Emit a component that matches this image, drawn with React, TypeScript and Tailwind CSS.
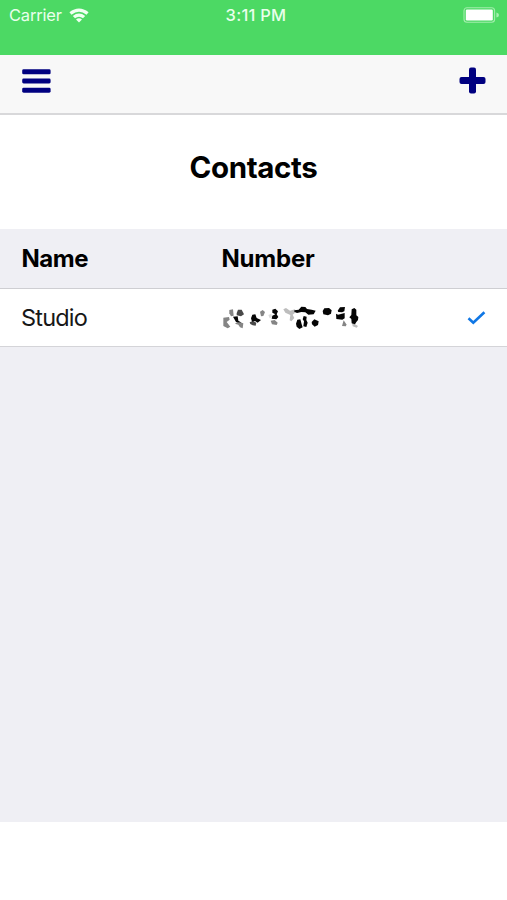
function WifiIcon() {
  return (
    <svg className="h-[15px] w-5" viewBox="0 0 20 15" fill="#f0fff2">
      <path d="M0.4 4.2Q10 -3.3 19.6 4.2L17.5 6.7Q10 .9 2.5 6.7Z" />
      <path d="M3.8 7.9Q10 3 16.2 7.9L14 10.3Q10 7.1 6 10.3Z" />
      <path d="M7 11.4Q10 8.9 13 11.4L10 14.6Z" />
    </svg>
  );
}

function BatteryIcon() {
  return (
    <svg className="h-4 w-9" viewBox="0 0 36 16" fill="none">
      <rect x="1" y=".8" width="30.6" height="14.4" rx="3" stroke="#a2edac" strokeWidth="1.1" />
      <rect x="2.8" y="2.6" width="27" height="10.8" rx="1.2" fill="#fff" />
      <path d="M33.4 5.4Q36 6 36 8T33.4 10.6Z" fill="#a5efb0" />
    </svg>
  );
}

// The number is obscured by scattered fragments.
function RedactedNumber() {
  return (
    <svg className="h-[26px] w-[145px]" viewBox="15 18 435 78">
      <g fill="#858585">
        <path d="M43 33l11-2 2 19-8 2-5-9Z" />
        <path d="M25 56l17-2 2 8-9 7 11 14-8 5-13-7Z" />
        <path d="M68 68l17 5-2 15-8-3-5-8-10-3Z" />
        <path d="M135 38l8-5 7 6-5 12-7 1Z" />
        <path d="M167 65l12-2 9 8-3 7-14-2Z" />
        <path d="M386 64l8 12-1 6-12-1Z" />
      </g>
      <g fill="#bdbdbd">
        <path d="M205 31l8-4 12 8 15-4 2 9-9 7 5 10-9 10-5-3 2-16-15-7Z" />
        <path d="M411 70l7 4 11 7-4 5-12-4Z" />
        <path d="M160 48l9-4 2 10-7 4Z" fill="#ddd" />
      </g>
      <g fill="#494949">
        <path d="M65 43l4-11 11 0 7 14-9 6-13-3Z" />
        <path d="M104 70l10-4 10 5-2 9-9-1-7-4Z" />
      </g>
      <g fill="#050505">
        <path d="M54 53l14-1 2 13 10 6-17-2Z" />
        <path d="M108 58l4-11 9-1 4 11 13 6-10 8-8-5-9 2Z" />
        <path d="M172 32l9-3 8 8-4 9 5 8-6 7-14-2 2-9 9-4-9-5Z" />
        <path d="M238 34l13-2 8-9 12 1 5 6 14 2 12 3-6 11-16 1-9-7-12-1-13 3-8-4Z" />
        <path d="M266 51l9 2-1 10 4 8-4 13-9-2 2-15-4-6Z" />
        <path d="M243 74l4-12 9-1 4 15 3 9-10 5-8-7Z" />
        <path d="M290 69l8-8 13 6-2 11-10 5-8-7Z" />
        <path d="M323 36l5-8 14-1 8 7-2 10-9 5-14-3Z" />
        <path d="M368 35l7-10 15-1-2 13-7 3-11-1Z" />
        <path d="M363 44l6 3 9-2 11-3 0 16-7 4-18-2Z" />
        <path d="M410 31l8-4 6 5 0 17 6 5-1 9-5 6-4 7-10-3-1-13-6-5 6-7Z" />
      </g>
    </svg>
  );
}

export default function App() {
  return (
    <div className="flex h-[900px] w-[507px] flex-col overflow-hidden bg-white font-['Inter','Liberation_Sans',sans-serif] text-black">
      <div className="grid h-[54.5px] grid-cols-3 items-start bg-[#4cd964] text-[#e9ffec]">
        <div className="flex h-[30px] items-center gap-[7px] pl-[9px]">
          <span className="w-[53px] text-[16.5px] tracking-[-0.2px]">Carrier</span>
          <WifiIcon />
        </div>
        <span className="pl-[5px] text-center text-[16.5px] leading-[30px] font-medium tracking-[0.25px]">3:11 PM</span>
        <div className="flex h-[30px] items-center justify-end pr-2"><BatteryIcon /></div>
      </div>
      <header className="flex h-[60.5px] items-start justify-between border-b-2 border-[#d8d8da] bg-[#f8f8f8] pr-[21px] pl-[22px]">
        <button aria-label="Menu" className="mt-[14.5px]">
          <svg className="h-6 w-[29px]" viewBox="0 0 29 24" fill="#000080">
            <rect x=".2" y=".3" width="28.4" height="5" rx="1.4" />
            <rect x=".2" y="9.5" width="28.4" height="5" rx="1.4" />
            <rect x=".2" y="18.7" width="28.4" height="5" rx="1.4" />
          </svg>
        </button>
        <button aria-label="Add contact" className="mt-3">
          <svg className="size-[27px]" viewBox="0 0 27 27" fill="#000080">
            <rect x=".5" y="10" width="26" height="7" rx="2" />
            <rect x="10" y=".5" width="7" height="26" rx="2" />
          </svg>
        </button>
      </header>
      <h1 className="h-[114px] pt-[30px] text-center text-[29.5px] leading-[44px] font-bold tracking-[-0.35px]">Contacts</h1>
      <main className="h-[593px] bg-[#efeff4]">
        <div className="flex h-[60px] items-center border-b border-[#ceced2] pl-[21.5px] text-[24px] font-bold">
          <span className="w-[200px] tracking-[-0.5px]">Name</span>
          <span className="tracking-[-0.2px]">Number</span>
        </div>
        <div className="flex h-[58px] items-center border-b border-[#d4d4d8] bg-white pl-[21px] text-[23.5px] text-[#171717]">
          <span className="w-[199px] tracking-[-0.8px]">Studio</span>
          <RedactedNumber />
          <svg className="mr-[21px] ml-auto h-[14px] w-[19px]" viewBox="0 0 19 14" fill="none" stroke="#1077e5" strokeWidth="2.6">
            <path d="M1.5 7.2L6.3 11.7L17.4 1.2" />
          </svg>
        </div>
      </main>
    </div>
  );
}
